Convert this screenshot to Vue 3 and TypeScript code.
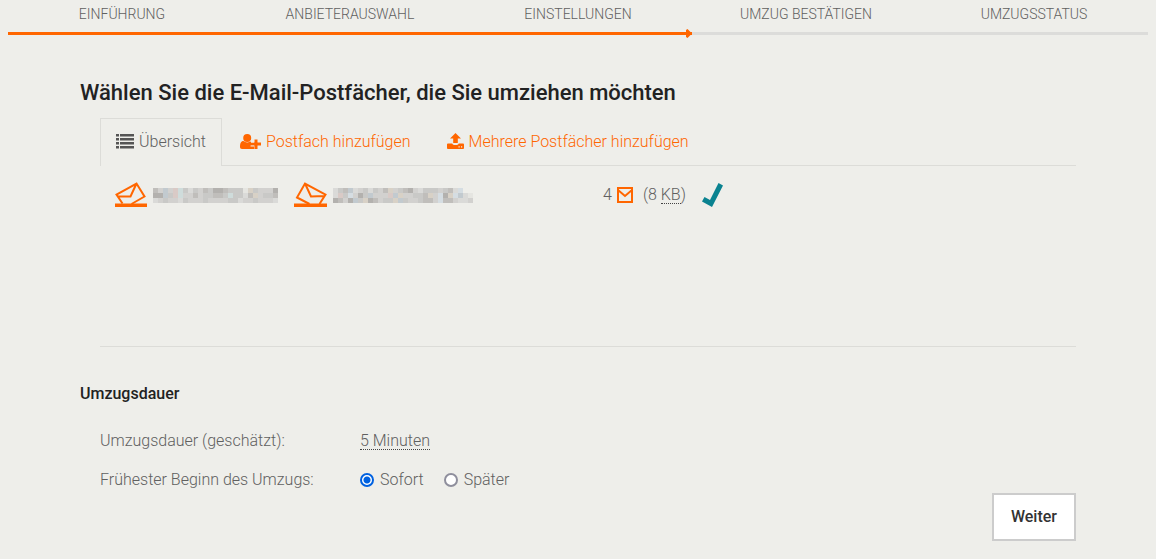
<script setup lang="ts">
import { ref } from 'vue'

interface Tile {
  x: number
  y: number
  fill: string
}

const steps: string[] = ['Einführung', 'Anbieterauswahl', 'Einstellungen', 'Umzug bestätigen', 'Umzugsstatus']
const currentStep = 3
const start = ref<'now' | 'later'>('now')

const palette: Record<string, string> = {
  a: '#b3b1ae',
  b: '#c0bebb',
  c: '#c9c9c7',
  d: '#d2d1cf',
  e: '#dadad8',
  f: '#e5e5e1',
  r: '#d9cac6',
  s: '#c2cacf',
  t: '#cfdcdb',
  o: '#d8d1c6',
  l: '#d5dde2',
}

const sourceRows: string[] = [
  'bdsdrtcecdbcaabcccfocddda',
  'aascrtddbdccbbctccebodccb',
  'edcddecdddcddddcceddcddde',
]

const targetRows: string[] = [
  'ecbsedcecdbodcbadecccdcbel  ',
  'ercldacsdddrsoddccbodlaolsef',
  'abdascoabdccoscddcbbdlbbdeed',
]

const toTiles = (rows: string[]): Tile[] =>
  rows.flatMap((row, y) =>
    [...row].flatMap((key, x) => (palette[key] ? [{ x, y, fill: palette[key] }] : [])),
  )

const sourceTiles = toTiles(sourceRows)
const targetTiles = toTiles(targetRows)
</script>

<template>
  <div class="page">
    <nav class="progress" aria-label="Fortschritt">
      <ol class="steps">
        <li v-for="(step, i) in steps" :key="step" :aria-current="i + 1 === currentStep ? 'step' : undefined">
          {{ step }}
        </li>
      </ol>
      <div class="track">
        <div class="done" :style="{ width: (currentStep / steps.length) * 100 + '%' }">
          <svg class="arrow" viewBox="0 0 6 9" width="6" height="9" aria-hidden="true">
            <path d="M1.500 0 6 4.500 1.500 9 0 8V1Z" fill="#ff6600" />
          </svg>
        </div>
      </div>
    </nav>

    <main class="content">
      <h1>Wählen Sie die E-Mail-Postfächer, die Sie umziehen möchten</h1>

      <section class="mailboxes">
        <div class="tabs">
          <a href="#overview" class="tab overview active">
            <svg viewBox="0 0 18 16" width="18" height="16" aria-hidden="true">
              <path d="M0 0h3v2.500H0zM4 0h14v2.500H4zM0 4h3v2.500H0zM4 4h14v2.500H4zM0 8h3v2.500H0zM4 8h14v2.500H4zM0 12h3v2.500H0zM4 12h14v2.500H4z" fill="#555555" />
            </svg>
            <span>Übersicht</span>
          </a>
          <a href="#add" class="tab single">
            <svg viewBox="0 0 21 17" width="21" height="17" aria-hidden="true">
              <path d="M7.200 0a4 4 0 0 1 4 4 4 4 0 0 1-8 0 4 4 0 0 1 4-4ZM3.500 7c1 .9 2.300 1.400 3.700 1.400S10 7.900 11 7V11.400h3.200V15H2C.7 15 0 14.300 0 12.800 0 9.600.8 7 3.500 7Z" fill="#ff6600" />
              <path d="M14.500 5.500h3v3H21v3h-3.500v3.500h-3v-3.500H11v-3h3.500Z" fill="#ff6600" />
              <path d="M11 6.500V8h3M10.500 12h3.500" fill="none" stroke="#eeeeea" />
            </svg>
            <span>Postfach hinzufügen</span>
          </a>
          <a href="#add-many" class="tab multiple">
            <svg viewBox="0 0 17 18" width="17" height="18" aria-hidden="true">
              <path d="M8.500 0 14 5.500h-3.200V10H6.200V5.500H3Z" fill="#ff6600" />
              <path d="M0 11.500q0-.9.900-.9h4.300q.5 1.400 1.800 1.400h3q1.300 0 1.800-1.400h4.300q.9 0 .9.900v3.600q0 .9-.9.900H.9q-.9 0-.9-.9ZM11.500 13.300v1.200h1.200v-1.200Zm2.500 0v1.200h1.200v-1.200Z" fill="#ff6600" fill-rule="evenodd" />
            </svg>
            <span>Mehrere Postfächer hinzufügen</span>
          </a>
        </div>

        <div class="list">
          <table>
            <tbody>
              <tr>
                <td class="source">
                  <div class="address">
                    <svg viewBox="0 0 32 26" width="32" height="26" aria-hidden="true">
                      <g fill="none" stroke="#ff6600" stroke-width="2">
                        <path d="M7.500 21.500 1.500 12.500 21.500 1.500 29.500 14.500 16.500 22M1.500 12.500 3 14.500 15.500 14.500 21.500 1.500" />
                      </g>
                      <path d="M0 21.500h32V25H0z" fill="#ff6600" />
                    </svg>
                    <svg viewBox="0 0 25 3" width="125" height="15" shape-rendering="crispEdges" role="img" aria-label="Quellpostfach">
                      <rect v-for="t in sourceTiles" :key="`${t.x}-${t.y}`" :x="t.x" :y="t.y" width="1" height="1" :fill="t.fill" />
                    </svg>
                  </div>
                </td>
                <td class="target">
                  <div class="address">
                    <svg viewBox="0 0 33 26" width="33" height="26" aria-hidden="true">
                      <g fill="none" stroke="#ff6600" stroke-width="2">
                        <path d="M15.500 22 3 15.500 11 1.500 31.500 12.500 25.500 22M11 1.500 17 14.500 30.500 14 31.500 12.500" />
                      </g>
                      <path d="M0 21.500h33V25H0z" fill="#ff6600" />
                    </svg>
                    <svg viewBox="0 0 28 3" width="140" height="15" shape-rendering="crispEdges" role="img" aria-label="Zielpostfach">
                      <rect v-for="t in targetTiles" :key="`${t.x}-${t.y}`" :x="t.x" :y="t.y" width="1" height="1" :fill="t.fill" />
                    </svg>
                  </div>
                </td>
                <td>
                  <div class="amount">
                    <span>4</span>
                    <svg viewBox="0 0 16 16" width="16" height="16" role="img" aria-label="E-Mails">
                      <path d="M1 1h14v14H1ZM1 3l7 6 7-6" fill="none" stroke="#ff6600" stroke-width="2" />
                    </svg>
                    <span class="size">(8 <abbr title="Kilobyte">KB</abbr>)</span>
                    <svg viewBox="0 0 22 24" width="22" height="24" role="img" aria-label="Bereit">
                      <path d="M16.500 0 21 2.500 10 24 0 18.500 2.500 14 8 17Z" fill="#0a8290" />
                    </svg>
                  </div>
                </td>
              </tr>
            </tbody>
          </table>
        </div>
      </section>

      <section>
        <h2>Umzugsdauer</h2>
        <div class="settings">
          <span>Umzugsdauer (geschätzt):</span>
          <span><abbr title="Geschätzte Dauer">5 Minuten</abbr></span>
          <span id="start-label">Frühester Beginn des Umzugs:</span>
          <div class="options" role="radiogroup" aria-labelledby="start-label">
            <label><input v-model="start" type="radio" name="start" value="now" />Sofort</label>
            <label><input v-model="start" type="radio" name="start" value="later" />Später</label>
          </div>
        </div>
      </section>

      <div class="actions">
        <button type="button">Weiter</button>
      </div>
    </main>
  </div>
</template>

<style>
body {
  background: #eeeeea;
}
</style>

<style scoped>
.page {
  padding: 0 8px;
  color: #606060;
  font: 300 16px/24px Roboto, "Liberation Sans", sans-serif;
}

.steps {
  display: grid;
  grid-template-columns: repeat(5, 1fr);
  margin: 0;
  padding: 4px 0 8px;
  list-style: none;
  text-align: center;
  text-transform: uppercase;
  font-size: 14px;
  line-height: 20px;
}

.track {
  height: 3px;
  background: #dcdcda;
}

.done {
  display: flex;
  align-items: center;
  justify-content: flex-end;
  height: 3px;
  background: #ff6600;
}

.arrow {
  flex: none;
}

.content {
  padding: 41px 72px 0;
}

h1 {
  margin: 0;
  color: #222222;
  font-size: 22px;
  line-height: 34px;
  font-weight: 500;
}

.mailboxes {
  margin: 8px 0 0;
  padding: 0 0 0 20px;
}

.tabs {
  display: flex;
  border-bottom: 1px solid #dcdcd8;
}

.tab {
  display: flex;
  align-items: center;
  height: 46px;
  border: 1px solid transparent;
  border-bottom: 0;
  color: #ff6600;
  text-decoration: none;
  gap: 5px;
}

.active {
  margin-bottom: -1px;
  padding: 0 15px 1px;
  border-color: #dcdcd8;
  background: #eeeeea;
  color: #606060;
}

.single {
  padding: 0 18px 0 17px;
}

.multiple {
  padding: 0 16px;
}

.list {
  min-height: 180px;
  border-bottom: 1px solid #dcdcd8;
}

table {
  width: 100%;
  border-collapse: collapse;
  table-layout: fixed;
}

td {
  height: 58px;
  padding: 0;
}

.source {
  width: 194px;
  padding-left: 15px;
  box-sizing: border-box;
}

.target {
  width: 309px;
}

.address {
  display: flex;
  align-items: center;
  gap: 6px;
}

.amount {
  display: flex;
  align-items: center;
  gap: 5px;
}

.size {
  margin: 0 11px 0 5px;
}

abbr {
  border-bottom: 1px dotted #444444;
  text-decoration: none;
  line-height: 16px;
  display: inline-block;
}

h2 {
  margin: 36px 0 24px;
  color: #222222;
  font-size: 16px;
  line-height: 22px;
  font-weight: 500;
}

.settings {
  display: grid;
  grid-template-columns: 260px 1fr;
  row-gap: 15px;
  padding-left: 20px;
}

.options {
  display: flex;
  gap: 20px;
}

label {
  display: flex;
  align-items: center;
  gap: 6px;
}

input {
  appearance: none;
  width: 14px;
  height: 14px;
  margin: 0;
  border: 2px solid #8f8f9d;
  border-radius: 50%;
  background: #ffffff;
}

input:checked {
  border-color: #0061e0;
  background: radial-gradient(circle, #0061e0 3px, #ffffff 4px);
}

.actions {
  display: flex;
  justify-content: flex-end;
  padding-top: 1px;
}

button {
  padding: 10px 17px;
  border: 2px solid #cccccc;
  background: #ffffff;
  color: #333333;
  font: 500 16px/24px Roboto, "Liberation Sans", sans-serif;
}
</style>
